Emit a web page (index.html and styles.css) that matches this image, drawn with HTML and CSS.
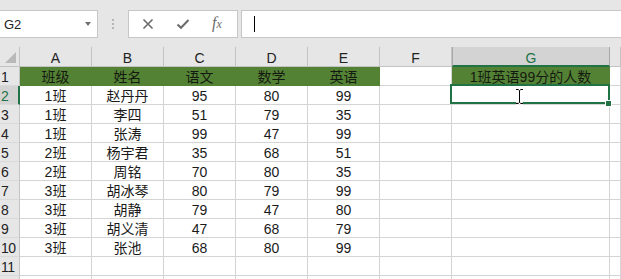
FILE: index.html
```html
<!DOCTYPE html>
<html lang="zh">
<head>
<meta charset="utf-8">
<title>Excel</title>
<link rel="stylesheet" href="styles.css">
</head>
<body>
<div class="app">
  <div class="toolbar">
    <div class="fbar">
      <div class="namebox"><span class="nb-text">G2</span><span class="nb-arrow"></span></div>
      <div class="grip"><i></i><i></i><i></i></div>
      <div class="btns">
        <svg class="ic" width="12" height="12" viewBox="0 0 12 12"><path d="M1.5 1.5L10.5 10.5M10.5 1.5L1.5 10.5" stroke="#6b6b6b" stroke-width="1.6" fill="none"/></svg>
        <svg class="ic" width="14" height="12" viewBox="0 0 14 12"><path d="M1.5 6.5L5 9.8L12.5 2" stroke="#6b6b6b" stroke-width="2" fill="none"/></svg>
        <span class="fx"><span class="fx-f">f</span><span class="fx-x">x</span></span>
      </div>
      <div class="input"><span class="caret"></span></div>
    </div>
  </div>
  <div class="sheet">
    <div class="h corner"><span class="tri"></span></div>
    <div class="h">A</div><div class="h">B</div><div class="h">C</div><div class="h">D</div><div class="h">E</div><div class="h">F</div><div class="h sel-col">G</div><div class="h"></div>

    <div class="r">1</div>
    <div class="c g">班级</div><div class="c g">姓名</div><div class="c g">语文</div><div class="c g">数学</div><div class="c g">英语</div><div class="c"></div><div class="c g">1班英语99分的人数</div><div class="c"></div>

    <div class="r sel-row">2</div>
    <div class="c">1班</div><div class="c">赵丹丹</div><div class="c">95</div><div class="c">80</div><div class="c">99</div><div class="c"></div>
    <div class="c active"><span class="selbox"></span><span class="handle"></span>
      <svg class="ibeam" width="9" height="17" viewBox="0 0 9 17"><path d="M1 1.5H3.2L4.5 2.6L5.8 1.5H8M4.5 2.6V14.4M1 15.5H3.2L4.5 14.4L5.8 15.5H8" stroke="#fff" stroke-width="2.6" fill="none"/><path d="M1 1.5H3.2L4.5 2.6L5.8 1.5H8M4.5 2.6V14.4M1 15.5H3.2L4.5 14.4L5.8 15.5H8" stroke="#000" stroke-width="1" fill="none"/></svg>
    </div>
    <div class="c"></div>

    <div class="r">3</div>
    <div class="c">1班</div><div class="c">李四</div><div class="c">51</div><div class="c">79</div><div class="c">35</div><div class="c"></div><div class="c"></div><div class="c"></div>

    <div class="r">4</div>
    <div class="c">1班</div><div class="c">张涛</div><div class="c">99</div><div class="c">47</div><div class="c">99</div><div class="c"></div><div class="c"></div><div class="c"></div>

    <div class="r">5</div>
    <div class="c">2班</div><div class="c">杨宇君</div><div class="c">35</div><div class="c">68</div><div class="c">51</div><div class="c"></div><div class="c"></div><div class="c"></div>

    <div class="r">6</div>
    <div class="c">2班</div><div class="c">周铭</div><div class="c">70</div><div class="c">80</div><div class="c">35</div><div class="c"></div><div class="c"></div><div class="c"></div>

    <div class="r">7</div>
    <div class="c">3班</div><div class="c">胡冰琴</div><div class="c">80</div><div class="c">79</div><div class="c">99</div><div class="c"></div><div class="c"></div><div class="c"></div>

    <div class="r">8</div>
    <div class="c">3班</div><div class="c">胡静</div><div class="c">79</div><div class="c">47</div><div class="c">80</div><div class="c"></div><div class="c"></div><div class="c"></div>

    <div class="r">9</div>
    <div class="c">3班</div><div class="c">胡义清</div><div class="c">47</div><div class="c">68</div><div class="c">79</div><div class="c"></div><div class="c"></div><div class="c"></div>

    <div class="r">10</div>
    <div class="c">3班</div><div class="c">张池</div><div class="c">68</div><div class="c">80</div><div class="c">99</div><div class="c"></div><div class="c"></div><div class="c"></div>

    <div class="r">11</div>
    <div class="c"></div><div class="c"></div><div class="c"></div><div class="c"></div><div class="c"></div><div class="c"></div><div class="c"></div><div class="c"></div>

    <div class="r"></div>
    <div class="c"></div><div class="c"></div><div class="c"></div><div class="c"></div><div class="c"></div><div class="c"></div><div class="c"></div><div class="c"></div>
  </div>
</div>
</body>
</html>
```

FILE: styles.css
```css
* { box-sizing: border-box; }
html, body { margin: 0; padding: 0; }
body {
  width: 621px;
  height: 279px;
  overflow: hidden;
  background: #ffffff;
  font-family: "Liberation Sans", "Noto Sans CJK SC", sans-serif;
  color: #1e1e1e;
}
.app { width: 621px; height: 279px; overflow: hidden; }

.toolbar {
  height: 47px;
  background: #e6e6e6;
  padding-top: 10px;
}
.fbar {
  display: flex;
  height: 28px;
}
.namebox {
  width: 98px;
  height: 28px;
  background: #fff;
  border: 1px solid #c6c6c6;
  border-left: none;
  display: flex;
  align-items: center;
  justify-content: space-between;
  padding: 0 6px 0 4px;
}
.nb-text { font-size: 13px; color: #222; padding-top: 1px; }
.nb-arrow {
  width: 0; height: 0;
  border-left: 3.5px solid transparent;
  border-right: 3.5px solid transparent;
  border-top: 4px solid #707070;
}
.grip {
  width: 30px;
  display: flex;
  flex-direction: column;
  align-items: center;
  justify-content: center;
  gap: 2px;
}
.grip i { display: block; width: 2px; height: 2px; background: #b5b5b5; }
.btns {
  width: 110px;
  height: 28px;
  background: #fff;
  border: 1px solid #c6c6c6;
  display: flex;
  align-items: center;
  padding-left: 13px;
  gap: 22px;
}
.ic { display: block; }
.fx {
  font-family: "Liberation Serif", serif;
  font-style: italic;
  color: #6b6b6b;
  font-size: 16px;
  line-height: 1;
  margin-left: 0;
  margin-top: -2px;
}
.fx-x { font-size: 12px; }
.input {
  flex: 1;
  margin-left: 3px;
  height: 28px;
  background: #fff;
  border: 1px solid #c6c6c6;
  border-right: none;
  padding: 5px 0 0 12px;
}
.caret { display: block; width: 1px; height: 16px; background: #000; }

.sheet {
  display: grid;
  grid-template-columns: 20px repeat(6, 72px) 158px 1fr;
  grid-template-rows: 20px;
  grid-auto-rows: 19px;
  font-size: 14px;
}
.h {
  background: #e6e6e6;
  border-right: 1px solid #c3c3c3;
  border-bottom: 1px solid #c3c3c3;
  text-align: center;
  padding-top: 3px;
  line-height: 17px;
  color: #222;
}
.corner { position: relative; }
.tri {
  position: absolute;
  right: 3px;
  bottom: 3px;
  width: 0; height: 0;
  border-left: 11px solid transparent;
  border-bottom: 11px solid #b9b9b9;
}
.sel-col {
  background: #d3d3d3;
  color: #217346;
  border-bottom: 2px solid #217346;
  border-left: 1px solid #a9a9a9;
  border-right: 1px solid #a9a9a9;
}
.r {
  background: #e6e6e6;
  border-right: 1px solid #c3c3c3;
  border-bottom: 1px solid #d9d9d9;
  padding: 2px 0 0 1px;
  width: 20px;
  line-height: 17px;
  text-align: left;
  color: #222;
  font-size: 14px;
  letter-spacing: -0.5px;
}
.sel-row {
  background: #d3d3d3;
  color: #217346;
  border-right: 2px solid #217346;
}
.c {
  border-right: 1px solid #d4d4d4;
  border-bottom: 1px solid #d4d4d4;
  text-align: center;
  padding-top: 2px;
  line-height: 17px;
  white-space: nowrap;
  color: #1a1a1a;
}
.g {
  background: #548235;
  border-color: #548235;
  color: #151a10;
}
.active { position: relative; }
.selbox {
  position: absolute;
  left: -2px;
  top: -2px;
  right: -1px;
  bottom: 0;
  border: 2px solid #217346;
}
.handle {
  position: absolute;
  right: -2px;
  bottom: -2px;
  width: 5px;
  height: 5px;
  background: #217346;
  box-shadow: 0 0 0 1px #fff;
}
.ibeam {
  position: absolute;
  left: 63px;
  top: 2px;
}
```
